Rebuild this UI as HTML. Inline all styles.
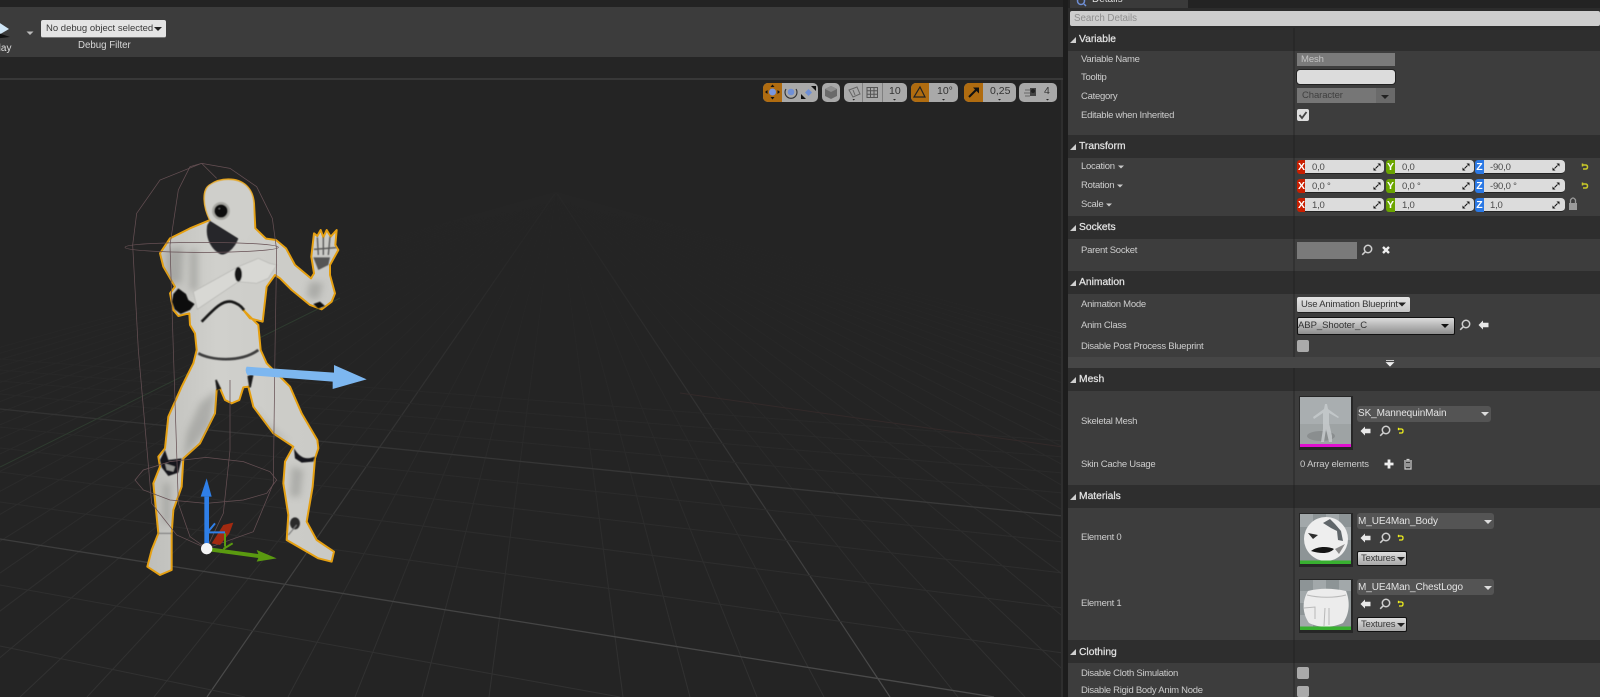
<!DOCTYPE html>
<html lang="en"><head><meta charset="utf-8"><title>Character Details</title>
<style>
*{box-sizing:border-box}
html,body{margin:0;padding:0;width:1600px;height:697px;overflow:hidden;background:#242424}
#r{position:absolute;left:0;top:0;width:1600px;height:697px;overflow:hidden;font-family:"Liberation Sans",sans-serif;filter:blur(.35px)}
#r div{position:absolute}
.t{white-space:nowrap;line-height:12px;height:12px;margin-top:1px;font-size:9.5px;letter-spacing:-.27px;color:#cdcdcd}
.h{left:1068px;width:532px;height:23px;background:#2e2e2e}
.ht{left:1079px;margin-top:1px;white-space:nowrap;line-height:14px;font-size:10.3px;color:#e2e2e2;-webkit-text-stroke:.25px #e2e2e2}
.f{background:#dcdcdc;border-radius:0 4px 4px 0;height:14px;border-bottom:1px solid #222}
.a{width:9px;height:14px;border-radius:3px 0 0 3px;color:#fff;font-size:10.5px;font-weight:bold;line-height:14px;text-align:center}
.v{color:#4a4a4a;letter-spacing:-.2px}
.cb{left:1297px;width:12px;height:11px;background:#aaa;border-radius:2px}
.combo{background:#545454;border-radius:3px;height:16px;left:1357px}
.tb{left:1357px;width:50px;height:15px;background:linear-gradient(#dedede,#a8a8a8);border:1px solid #111;border-radius:2px;color:#3a3a3a;font-size:9.5px;letter-spacing:-.2px;line-height:13px;padding-left:3px;white-space:nowrap}
.g{height:19px;top:83px;background:#a9a9a9;border-radius:5px}
.o{height:19px;top:83px;background:#b06c10;border-radius:5px 0 0 5px}
.n{top:85px;color:#333;font-size:10.5px;line-height:12px;white-space:nowrap}
</style></head><body><div id="r">

<div style="left:0;top:0;width:1063px;height:7px;background:#232323"></div>
<div style="left:0;top:7px;width:1063px;height:50px;background:#3c3c3c"></div>
<div style="left:0;top:57px;width:1063px;height:21px;background:#252525"></div>
<div style="left:0;top:78px;width:1063px;height:2px;background:#383838"></div>

<svg style="position:absolute;left:0;top:80px" width="1063" height="617" viewBox="0 80 1063 617">
<defs>
<linearGradient id="gm" gradientUnits="userSpaceOnUse" x1="0" y1="280" x2="0" y2="697"><stop offset="0" stop-color="#252525"/><stop offset=".5" stop-color="#2b2b2b"/><stop offset="1" stop-color="#323232"/></linearGradient>
<linearGradient id="gM" gradientUnits="userSpaceOnUse" x1="0" y1="240" x2="0" y2="697"><stop offset="0" stop-color="#272727"/><stop offset=".5" stop-color="#363636"/><stop offset="1" stop-color="#4c4c4c"/></linearGradient>
<linearGradient id="bodyG" gradientUnits="userSpaceOnUse" x1="100" y1="0" x2="650" y2="0"><stop offset="0" stop-color="#bdbdb9"/><stop offset=".4" stop-color="#d0d0cc"/><stop offset="1" stop-color="#cacac6"/></linearGradient>
<filter id="bl" x="-30%" y="-30%" width="160%" height="160%"><feGaussianBlur stdDeviation="10"/></filter>
<filter id="sf"><feGaussianBlur stdDeviation="1.500"/></filter>
<clipPath id="bc"><path d="M355 88C400 88 428 115 432 160L436 235L468 266L498 270L528 295L555 345L603 385L612 370L604 320L612 250L622 258L632 240L640 262L650 240L662 260L680 240L676 285L685 300L660 345L660 375L675 430L665 455L635 478L600 465L545 420L510 385L495 375L470 410L458 515L420 505L400 480L445 525L452 600L470 640L540 710L575 790L622 870L625 895L615 925L608 1010L590 1115L620 1170L672 1205L665 1235L625 1225L530 1170L535 1095L520 1000L525 935L550 890L490 850L430 770L415 710L400 712L388 750L365 760L345 750L330 715L320 720L315 790L270 880L220 925L215 1010L190 1080L185 1150L185 1260L150 1275L112 1250L125 1200L145 1150L130 1000L150 950L145 920L165 895L175 800L215 710L250 640L260 600L255 550L240 525L238 490L205 498L190 480L180 430L195 410L160 350L150 310L180 265L240 235L300 210C280 170 275 120 300 105C320 90 340 88 355 88Z"/></clipPath>
</defs>
<path fill="none" stroke="url(#gm)" stroke-width="1" d="M556 192L623 697M556 192L690 697M556 192L757 697M556 192L824 697M556 192L958 697M556 192L1025 697M556 192L1092 697M556 192L1159 697M556 192L1293 697M556 192L1360 697M556 192L1427 697M556 192L1494 697M556 192L1628 697M556 192L1695 697M556 192L1762 697M556 192L1829 697M556 192L1963 697M556 192L2030 697M556 192L2097 697M556 192L2164 697M556 192L2298 697M556 192L2365 697M556 192L489 697M556 192L422 697M556 192L355 697M556 192L288 697M556 192L154 697M556 192L87 697M556 192L20 697M556 192L-47 697M556 192L-181 697M556 192L-248 697M556 192L-315 697M556 192L-382 697M556 192L-516 697M556 192L-583 697M556 192L-650 697M556 192L-717 697M556 192L-851 697M556 192L-918 697M556 192L-985 697M556 192L-1052 697M556 192L-1186 697M556 192L-1253 697"/>
<path fill="none" stroke="url(#gM)" stroke-width="1.200" d="M556 192L890 697M556 192L207 697"/>
<path fill="none" stroke="url(#gm)" stroke-width="1.100" d="M556 192L1225 697M556 192L1560 697M556 192L1895 697M556 192L2230 697M556 192L-114 697M556 192L-449 697M556 192L-784 697M556 192L-1119 697"/>
<path fill="none" stroke="url(#gm)" stroke-width="1" d="M0 646L245 697M0 585L620 697M0 502L1063 653M0 472L1063 608M0 448L1063 573M0 427L1063 542M0 394L1063 493M0 381L1063 473M0 370L1063 457M0 359L1063 441"/>
<path fill="none" stroke="url(#gM)" stroke-width="1.300" d="M0 539L994 697M0 409L1063 516"/>
<path fill="none" stroke="#2e3b2f" stroke-width="1" d="M0 467L340 298"/>
<path fill="none" stroke="#332a2a" stroke-width="1" d="M680 393L1063 447"/>

<g transform="translate(110,150) scale(.33333)">
 <path d="M355 88C400 88 428 115 432 160L436 235L468 266L498 270L528 295L555 345L603 385L612 370L604 320L612 250L622 258L632 240L640 262L650 240L662 260L680 240L676 285L685 300L660 345L660 375L675 430L665 455L635 478L600 465L545 420L510 385L495 375L470 410L458 515L420 505L400 480L445 525L452 600L470 640L540 710L575 790L622 870L625 895L615 925L608 1010L590 1115L620 1170L672 1205L665 1235L625 1225L530 1170L535 1095L520 1000L525 935L550 890L490 850L430 770L415 710L400 712L388 750L365 760L345 750L330 715L320 720L315 790L270 880L220 925L215 1010L190 1080L185 1150L185 1260L150 1275L112 1250L125 1200L145 1150L130 1000L150 950L145 920L165 895L175 800L215 710L250 640L260 600L255 550L240 525L238 490L205 498L190 480L180 430L195 410L160 350L150 310L180 265L240 235L300 210C280 170 275 120 300 105C320 90 340 88 355 88Z" fill="url(#bodyG)" stroke="#e5a012" stroke-width="6" stroke-linejoin="round"/>
 <g clip-path="url(#bc)">
  <g filter="url(#bl)" fill="#7d7e7a" opacity=".4">
   <path d="M170 300L220 290L215 400L170 400Z"/>
   <path d="M270 760L320 720L300 830L220 925L230 850Z"/>
   <path d="M160 1000L180 1000L180 1120L160 1120Z"/>
   <path d="M430 770L470 820L540 880L480 850Z"/>
   <path d="M545 950L580 960L570 1040L540 1040Z"/>
   <path d="M240 300L262 300L262 420L240 420Z"/>
   <path d="M600 395L640 400L625 450L590 440Z"/>
  </g>
 </g>
 <g filter="url(#sf)">
 <path d="M292 225L300 212L345 240L385 265C375 295 345 320 330 312C300 295 285 260 292 225Z" fill="#26262a"/>
 <path d="M355 90C400 90 428 115 430 160L430 240L408 272L385 262L340 235L300 210C280 170 277 120 300 105C320 92 340 90 355 90Z" fill="#cfcfcb"/>
 <circle cx="333" cy="183" r="27" fill="#a8a8a3"/><circle cx="333" cy="183" r="20" fill="#0c0c0c"/><circle cx="328" cy="176" r="2" fill="#777"/>
 <path d="M250 425L385 350L445 325L478 340L500 345L475 385L440 400L385 395L262 478Z" fill="#d8d8d4" stroke="#b4b4b0" stroke-width="2"/>
 <ellipse cx="385" cy="373" rx="11" ry="22" fill="#121212"/>
 <path d="M190 432L205 415L228 432L235 450L254 462L240 480L212 492L194 478L186 455Z" fill="#0e0e0e"/>
 <path d="M275 515C310 480 335 450 365 455C385 460 395 470 402 480" stroke="#141414" stroke-width="8" fill="none"/>
 <path d="M265 610C300 630 390 640 445 600" stroke="#3d3d3e" stroke-width="8" fill="none"/>
 <path d="M318 690L330 715L322 718ZM415 680L428 675L420 712Z" fill="#1a1a1a" stroke="#1a1a1a" stroke-width="5"/>
 <path d="M610 322L660 322L655 345L625 360Z" fill="#555"/>
 <path d="M612 298L678 293M622 262L625 315M640 262L640 315M660 260L655 315" stroke="#555" stroke-width="4" fill="none"/>
 <path d="M610 462L630 455L645 468L625 476Z" fill="#111"/>
 <path d="M150 930L165 900L175 930L215 925L205 968L175 978L155 952Z" fill="#17171a"/>
 <path d="M165 940L195 950L190 965L170 960Z" fill="#9a9a96"/>
 <path d="M552 895C570 925 590 930 615 920L610 935L575 938L555 925Z" fill="#17171a"/>
 <ellipse cx="555" cy="1120" rx="15" ry="18" fill="#2a2a2b"/>
 <path d="M145 1150L185 1150M535 1155L560 1125" stroke="#777" stroke-width="3"/>
 </g>
 <g fill="none" stroke="#665054" stroke-width="2.200">
  <path d="M275 40L150 90L80 190L68 285L85 600L125 1060L200 1155L290 1195"/>
  <path d="M275 40L240 50L205 120L180 285L190 600L205 1060L240 1160L290 1195"/>
  <path d="M275 40L360 55L440 110L487 205L500 300L495 600L490 1000L430 1145L290 1195"/>
  <path d="M275 40L320 85M360 690L360 900L340 1090L290 1195"/>
  <ellipse cx="275" cy="292" rx="230" ry="15"/>
  <path d="M75 990L100 960L180 935L288 922L400 935L480 965L500 990L470 1030L400 1050L288 1060L180 1050L100 1020Z"/>
 </g>
 <path d="M410 650L672 668L672 645L770 688L668 717L668 695L412 675Q403 662 410 650Z" fill="#7db7f0"/>
 <path d="M305 1180L340 1125L370 1118L358 1150L330 1185Z" fill="#a32a10"/>
 <path d="M345 1150V1190M368 1180L340 1197" stroke="#5a9a10" stroke-width="6" fill="none"/>
 <path d="M283 1040H297V1195H283Z" fill="#2f7fe8"/>
 <path d="M272 1040L290 985L305 1040Z" fill="#2f7fe8"/>
 <path d="M297 1147L345 1147M290 1150L315 1120" stroke="#2f7fe8" stroke-width="6" fill="none"/>
 <path d="M290 1191L445 1212L440 1200L500 1225L440 1235L445 1224L290 1203Z" fill="#5a9a10"/>
 <circle cx="290" cy="1196" r="17" fill="#f4f4f4"/>
</g>
</svg>

<svg style="position:absolute;left:0;top:15px" width="40" height="30">
 <path d="M-8 3L9 14L-8 24Z" fill="#cfe6f7"/><path d="M-8 16L10 22L-8 24Z" fill="#111"/>
 <path d="M26.500 16.500H33.500L30 20Z" fill="#bbb"/>
</svg>
<div class="t" style="left:-8px;top:42px;font-size:10px;letter-spacing:0;color:#ddd">Play</div>
<div style="left:41px;top:20px;width:125px;height:18px;background:#e4e4e4;border-radius:2px;border-bottom:1px solid #777;color:#3a3a3a;font-size:9.500px;line-height:18px;padding-left:5px;white-space:nowrap">No debug object selected</div>
<svg style="position:absolute;left:153px;top:26px" width="10" height="6"><path d="M1 1H9L5 5Z" fill="#222"/></svg>
<div class="t" style="left:78px;top:38px;font-size:9.700px;letter-spacing:0;color:#d8d8d8;margin-top:1.500px">Debug Filter</div>

<div class="g" style="left:763px;width:55px"></div><div class="o" style="left:763px;width:19px"></div>
<div class="g" style="left:822px;width:18px"></div>
<div class="g" style="left:844px;width:63px"></div>
<div style="left:862px;top:83px;width:1px;height:19px;background:#808080"></div>
<div style="left:882px;top:83px;width:1px;height:19px;background:#808080"></div>
<div class="g" style="left:911px;width:47px"></div><div class="o" style="left:911px;width:18px"></div>
<div class="g" style="left:964px;width:52px"></div><div class="o" style="left:964px;width:19px"></div>
<div class="g" style="left:1019px;width:38px"></div>
<div class="n" style="left:889px">10</div>
<div class="n" style="left:937px">10°</div>
<div class="n" style="left:990px">0,25</div>
<div class="n" style="left:1044px">4</div>
<svg style="position:absolute;left:760px;top:80px" width="300" height="25" viewBox="760 80 300 25">
 <circle cx="772.500" cy="92" r="3.500" fill="#7a97dd"/>
 <path d="M772.500 84.500L770.500 87H774.500ZM772.500 99.500L770.500 97H774.500ZM765 92L767.500 90V94ZM780 92L777.500 90V94Z" fill="#111"/>
 <circle cx="791" cy="92" r="3.300" fill="#6f8fd6"/><path d="M786 89A6 6 0 1 0 796 89" fill="none" stroke="#333" stroke-width="1.100"/>
 <rect x="806" y="90" width="5" height="5" fill="#6f8fd6" transform="rotate(45 808.500 92.500)"/>
 <path d="M811 86H816V91ZM806 99H801V94Z" fill="#111"/>
 <path d="M825 89L831 86L837 89V96L831 99L825 96Z" fill="#6a6a6a"/><path d="M825 89L831 92L837 89L831 86Z" fill="#8e8e8e"/>
 <path d="M849 90L857 87L860 94L853 97Z" fill="none" stroke="#666"/><path d="M853 90L855 95" stroke="#666"/>
 <path d="M867 87.500H877.500V97.500H867ZM867 90.800H877.500M867 94.200H877.500M870.500 87.500V97.500M874 87.500V97.500" fill="none" stroke="#555"/>
 <path d="M920 87L925 97H914Z" fill="none" stroke="#222" stroke-width="1.200"/>
 <path d="M969 97L977 89" stroke="#111" stroke-width="2"/><path d="M973 87.500H979V93.500Z" fill="#111"/>
 <path d="M1030 88H1036V96H1030Z" fill="#444"/><path d="M1025 90H1030M1024 93H1030M1025 96H1030" stroke="#666"/><circle cx="1033" cy="91" r="2" fill="#222"/>
 <path d="M852.500 99H855L853.700 100.500ZM893 99H896L894.500 100.500ZM942 99H945L943.500 100.500ZM998 99H1001L999.500 100.500ZM1046 99H1049L1047.500 100.500Z" fill="#222"/>
</svg>

<div style="left:1063px;top:0;width:6px;height:697px;background:#1d1d1d"></div>
<div style="left:1061px;top:80px;width:2px;height:617px;background:#2e2e2e"></div>
<div style="left:1068px;top:0;width:532px;height:697px;background:#3d3d3d"></div>
<div style="left:1068px;top:0;width:532px;height:8px;background:#232323"></div>
<div style="left:1070px;top:0;width:118px;height:8px;background:#3a3a3a"></div>
<div class="t" style="left:1092px;top:-7px;font-size:10px;color:#ddd;letter-spacing:0">Details</div>
<div style="left:1068px;top:8px;width:532px;height:20px;background:#2c2c2c"></div>
<div style="left:1070px;top:11px;width:530px;height:15px;background:#cdcdcd;border-radius:2px;color:#8f8f8f;font-size:9.800px;line-height:15px;padding-left:4px;letter-spacing:-.05px">Search Details</div>

<div style="left:1293px;top:28px;width:2px;height:669px;background:#323232"></div>

<div class="h" style="top:28px"></div><div class="ht" style="top:32px">Variable</div>
<div class="h" style="top:135px"></div><div class="ht" style="top:139px">Transform</div>
<div class="h" style="top:216px"></div><div class="ht" style="top:220px">Sockets</div>
<div class="h" style="top:271px"></div><div class="ht" style="top:275px">Animation</div>
<div class="h" style="top:368px"></div><div class="ht" style="top:372px">Mesh</div>
<div class="h" style="top:485px"></div><div class="ht" style="top:489px">Materials</div>
<div class="h" style="top:640px"></div><div class="ht" style="top:645px">Clothing</div>
<div style="left:1293px;top:28px;width:2px;height:23px;background:#282828"></div>
<div style="left:1293px;top:135px;width:2px;height:23px;background:#282828"></div>
<div style="left:1293px;top:216px;width:2px;height:23px;background:#282828"></div>
<div style="left:1293px;top:271px;width:2px;height:23px;background:#282828"></div>
<div style="left:1293px;top:368px;width:2px;height:23px;background:#282828"></div>
<div style="left:1293px;top:485px;width:2px;height:23px;background:#282828"></div>
<div style="left:1293px;top:640px;width:2px;height:23px;background:#282828"></div>
<div style="left:1068px;top:357px;width:532px;height:11px;background:#464646"></div>

<div class="t" style="left:1081px;top:53px">Variable Name</div>
<div class="t" style="left:1081px;top:71px">Tooltip</div>
<div class="t" style="left:1081px;top:90px">Category</div>
<div class="t" style="left:1081px;top:109px">Editable when Inherited</div>
<div class="t" style="left:1081px;top:160px">Location</div>
<div class="t" style="left:1081px;top:179px">Rotation</div>
<div class="t" style="left:1081px;top:198px">Scale</div>
<div class="t" style="left:1081px;top:244px">Parent Socket</div>
<div class="t" style="left:1081px;top:298px">Animation Mode</div>
<div class="t" style="left:1081px;top:319px">Anim Class</div>
<div class="t" style="left:1081px;top:340px">Disable Post Process Blueprint</div>
<div class="t" style="left:1081px;top:415px">Skeletal Mesh</div>
<div class="t" style="left:1081px;top:458px">Skin Cache Usage</div>
<div class="t" style="left:1081px;top:531px">Element 0</div>
<div class="t" style="left:1081px;top:597px">Element 1</div>
<div class="t" style="left:1081px;top:667px">Disable Cloth Simulation</div>
<div class="t" style="left:1081px;top:684px">Disable Rigid Body Anim Node</div>

<div style="left:1297px;top:53px;width:98px;height:13px;background:#7a7a7a"></div>
<div class="t" style="left:1301px;top:53px;color:#c4c4c4;letter-spacing:-.1px">Mesh</div>
<div style="left:1296px;top:69px;width:100px;height:16px;background:#dcdcdc;border-radius:4px;border:1px solid #222"></div>
<div style="left:1297px;top:88px;width:98px;height:15px;background:#767676"></div>
<div style="left:1376px;top:88px;width:19px;height:15px;background:#6a6a6a"></div>
<div class="t" style="left:1302px;top:89px;color:#3f3f3f;letter-spacing:-.1px">Character</div>
<div class="cb" style="top:109px;height:12px;background:#dedede"></div>

<div class="a" style="left:1297px;top:160px;background:#c81e00">X</div><div class="f" style="left:1305px;top:160px;width:79px"></div>
<div class="a" style="left:1386px;top:160px;background:#6aa400">Y</div><div class="f" style="left:1395px;top:160px;width:79px"></div>
<div class="a" style="left:1475px;top:160px;background:#2a78e4">Z</div><div class="f" style="left:1484px;top:160px;width:81px"></div>
<div class="a" style="left:1297px;top:179px;background:#c81e00">X</div><div class="f" style="left:1305px;top:179px;width:79px"></div>
<div class="a" style="left:1386px;top:179px;background:#6aa400">Y</div><div class="f" style="left:1395px;top:179px;width:79px"></div>
<div class="a" style="left:1475px;top:179px;background:#2a78e4">Z</div><div class="f" style="left:1484px;top:179px;width:81px"></div>
<div class="a" style="left:1297px;top:198px;background:#c81e00">X</div><div class="f" style="left:1305px;top:198px;width:79px"></div>
<div class="a" style="left:1386px;top:198px;background:#6aa400">Y</div><div class="f" style="left:1395px;top:198px;width:79px"></div>
<div class="a" style="left:1475px;top:198px;background:#2a78e4">Z</div><div class="f" style="left:1484px;top:198px;width:81px"></div>
<div class="t v" style="left:1312px;top:161px">0,0</div><div class="t v" style="left:1402px;top:161px">0,0</div><div class="t v" style="left:1490px;top:161px">-90,0</div>
<div class="t v" style="left:1312px;top:180px">0,0 °</div><div class="t v" style="left:1402px;top:180px">0,0 °</div><div class="t v" style="left:1490px;top:180px">-90,0 °</div>
<div class="t v" style="left:1312px;top:199px">1,0</div><div class="t v" style="left:1402px;top:199px">1,0</div><div class="t v" style="left:1490px;top:199px">1,0</div>

<div style="left:1297px;top:242px;width:60px;height:17px;background:#7a7a7a"></div>

<div style="left:1297px;top:297px;width:113px;height:16px;background:linear-gradient(#e4e4e4,#c4c4c4);border-radius:2px;border-bottom:1px solid #222"></div>
<div class="t" style="left:1301px;top:298px;color:#333;letter-spacing:-.2px">Use Animation Blueprint</div>
<div style="left:1297px;top:317px;width:158px;height:18px;background:linear-gradient(#dcdcdc,#8e8e8e);border:1px solid #111;border-radius:2px"></div>
<div class="t" style="left:1298px;top:319px;color:#333;letter-spacing:-.05px">ABP_Shooter_C</div>
<div class="cb" style="top:340px;height:12px"></div>

<div class="combo" style="top:406px;width:134px"></div>
<div class="t" style="left:1358px;top:407px;color:#e4e4e4;letter-spacing:-.1px;font-size:10px">SK_MannequinMain</div>
<div class="t" style="left:1300px;top:458px;letter-spacing:-.15px">0 Array elements</div>
<div class="combo" style="top:513px;width:137px"></div>
<div class="t" style="left:1358px;top:515px;color:#e4e4e4;letter-spacing:-.1px;font-size:10px">M_UE4Man_Body</div>
<div class="tb" style="top:551px">Textures</div>
<div class="combo" style="top:579px;width:137px"></div>
<div class="t" style="left:1358px;top:581px;color:#e4e4e4;letter-spacing:-.1px;font-size:10px">M_UE4Man_ChestLogo</div>
<div class="tb" style="top:617px">Textures</div>
<div class="cb" style="top:667px;height:12px"></div>
<div class="cb" style="top:686px"></div>

<svg style="position:absolute;left:1299px;top:396px" width="54" height="54" viewBox="0 0 54 54">
 <rect width="54" height="54" fill="#262626"/><rect x="1" y="1" width="51" height="49" fill="#a9aeb0"/>
 <path d="M1 28H52V50H1Z" fill="#9ea3a4"/><ellipse cx="22" cy="40" rx="14" ry="5" fill="#8a8e8f"/>
 <path d="M26 8L28 8L29 13L40 21L39 22L30 17L30 27L33 40L33 46L30 46L27 33L25 46L22 46L24 33L24 17L15 23L14 21L25 13Z" fill="#c6cacc" opacity=".85"/>
 <rect x="1" y="48" width="51" height="3" fill="#e010d0"/>
</svg>
<svg style="position:absolute;left:1299px;top:513px" width="54" height="54" viewBox="0 0 54 54">
 <rect width="54" height="54" fill="#262626"/><rect x="1" y="1" width="51" height="49" fill="#8d9496"/>
 <path d="M1 1H14V14H1ZM27 1H40V14H27ZM14 14H27V27H14ZM40 14H52V27H40Z" fill="#a2a8aa"/>
 <circle cx="27" cy="26" r="22" fill="#eeeeee"/>
 <path d="M24 10L31 6L36 11L42 18L44 28L39 27L38 18L32 15Z" fill="#60666a"/><path d="M9 20L19 22L14 26Z" fill="#2d2d2d"/>
 <path d="M12 38C18 33 29 33 35 36C30 41 22 41 12 38Z" fill="#151515"/><path d="M36 36L46 31L40 41Z" fill="#8a8a8a"/>
 <rect x="1" y="47.500" width="51" height="3.500" fill="#38b030"/>
</svg>
<svg style="position:absolute;left:1299px;top:579px" width="54" height="54" viewBox="0 0 54 54">
 <rect width="54" height="54" fill="#262626"/><rect x="1" y="1" width="51" height="49" fill="#8d9496"/>
 <path d="M14 1H27V12H14ZM40 1H52V12H40ZM1 12H14V24H1ZM1 36H14V48H1Z" fill="#a2a8aa"/>
 <path d="M9 12C20 9 34 9 47 12C51 22 51 34 44 44C33 49 20 49 10 44C3 34 3 22 9 12Z" fill="#ececec"/>
 <path d="M8 16C20 19 36 19 47 16M5 29L16 28L16 40M26 29L25 47M30 29L30 46" fill="none" stroke="#b8b8b8" stroke-width="1"/>
 <rect x="1" y="47.500" width="51" height="3.500" fill="#38b030"/>
</svg>

<svg style="position:absolute;left:1060px;top:0" width="540" height="697" viewBox="1060 0 540 697">
 <defs>
  <g id="rz"><path d="M.5 -3.500H3.500V-.5ZM-3.500 .5V3.500H-.5Z" fill="#111"/><path d="M-1.500 1.500L1.500 -1.500" stroke="#111" stroke-width="1"/></g>
  <g id="sr" fill="none" stroke="#cfcfcf" stroke-width="1.500"><circle cx="1" cy="-1" r="3.700"/><path d="M-1.700 1.700L-4.800 4.800"/></g>
  <path id="bk" d="M-5.500 0L-1 -4.500V-2.300H4.500V2.300H-1V4.500Z" fill="#e8e8e8"/>
  <g id="ry" fill="none" stroke="#efef1e" stroke-width="1.300"><path d="M-2 -2H.5Q2 -2 2 0Q2 2 .5 2H-2"/><path d="M-2.500 -3.200V-.8"/></g>
  <g id="rd" fill="none" stroke="#c8c828" stroke-width="1.500"><path d="M-2 -2H.5Q2.500 -2 2.500 0Q2.500 2 .5 2H-2"/><path d="M-2.500 -3.500V-.5"/></g>
  <path id="hd" d="M-3 3H3V-3Z" fill="#cfcfcf"/>
  <path id="dn" d="M-3 -1.500H3L0 1.500Z" fill="#c9c9c9"/>
 </defs>
 <circle cx="1081" cy="1" r="3.500" fill="none" stroke="#6f8fd6" stroke-width="1.500"/><path d="M1084 4L1086 6" stroke="#6f8fd6" stroke-width="1.500"/>
 <use href="#hd" x="1073" y="40"/><use href="#hd" x="1073" y="147"/><use href="#hd" x="1073" y="228"/><use href="#hd" x="1073" y="283"/><use href="#hd" x="1073" y="380"/><use href="#hd" x="1073" y="497"/><use href="#hd" x="1073" y="652"/>
 <use href="#dn" x="1121" y="167"/><use href="#dn" x="1120" y="186"/><use href="#dn" x="1109" y="205"/>
 <path d="M1381 95H1389L1385 99Z" fill="#222"/>
 <path d="M1299.500 115L1302 118L1306.500 112" fill="none" stroke="#444" stroke-width="1.800"/>
 <use href="#rz" x="1377" y="167"/><use href="#rz" x="1466" y="167"/><use href="#rz" x="1556" y="167"/>
 <use href="#rz" x="1377" y="186"/><use href="#rz" x="1466" y="186"/><use href="#rz" x="1556" y="186"/>
 <use href="#rz" x="1377" y="205"/><use href="#rz" x="1466" y="205"/><use href="#rz" x="1556" y="205"/>
 <use href="#rd" x="1585" y="167"/><use href="#rd" x="1585" y="186"/>
 <path d="M1569 203H1577V210H1569Z" fill="#9a9a9a"/><path d="M1570.500 203V200Q1573 196 1575.500 200V203" fill="none" stroke="#9a9a9a" stroke-width="1.300"/>
 <use href="#sr" x="1367" y="250"/>
 <path d="M1383 247L1389 253M1389 247L1383 253" stroke="#eee" stroke-width="2.400"/>
 <path d="M1398 302.500H1406L1402 306.500Z" fill="#222"/>
 <path d="M1441 324H1449L1445 328Z" fill="#111"/>
 <use href="#sr" x="1465" y="325"/><use href="#bk" x="1484" y="325"/>
 <path d="M1386 360.500H1394M1386.500 362.500H1393.500L1390 366Z" stroke="#eee" stroke-width=".8" fill="#eee"/>
 <path d="M1481 412H1489L1485 416Z" fill="#ddd"/>
 <use href="#bk" x="1366" y="431"/><use href="#sr" x="1385" y="431"/><use href="#ry" x="1401" y="431"/>
 <path d="M1384.500 464H1393.500M1389 459.500V468.500" stroke="#eee" stroke-width="2.800"/>
 <path d="M1404 461H1412M1405 462V469H1411V462M1406.500 459.500H1409.500M1407 463V467M1409 463V467" fill="none" stroke="#cfcfcf" stroke-width="1.200"/>
 <path d="M1484 520H1492L1488 524Z" fill="#ddd"/>
 <use href="#bk" x="1366" y="538"/><use href="#sr" x="1385" y="538"/><use href="#ry" x="1401" y="538"/>
 <path d="M1397 557H1405L1401 561Z" fill="#222"/>
 <path d="M1484 586H1492L1488 590Z" fill="#ddd"/>
 <use href="#bk" x="1366" y="604"/><use href="#sr" x="1385" y="604"/><use href="#ry" x="1401" y="604"/>
 <path d="M1397 623H1405L1401 627Z" fill="#222"/>
</svg>
</div></body></html>
